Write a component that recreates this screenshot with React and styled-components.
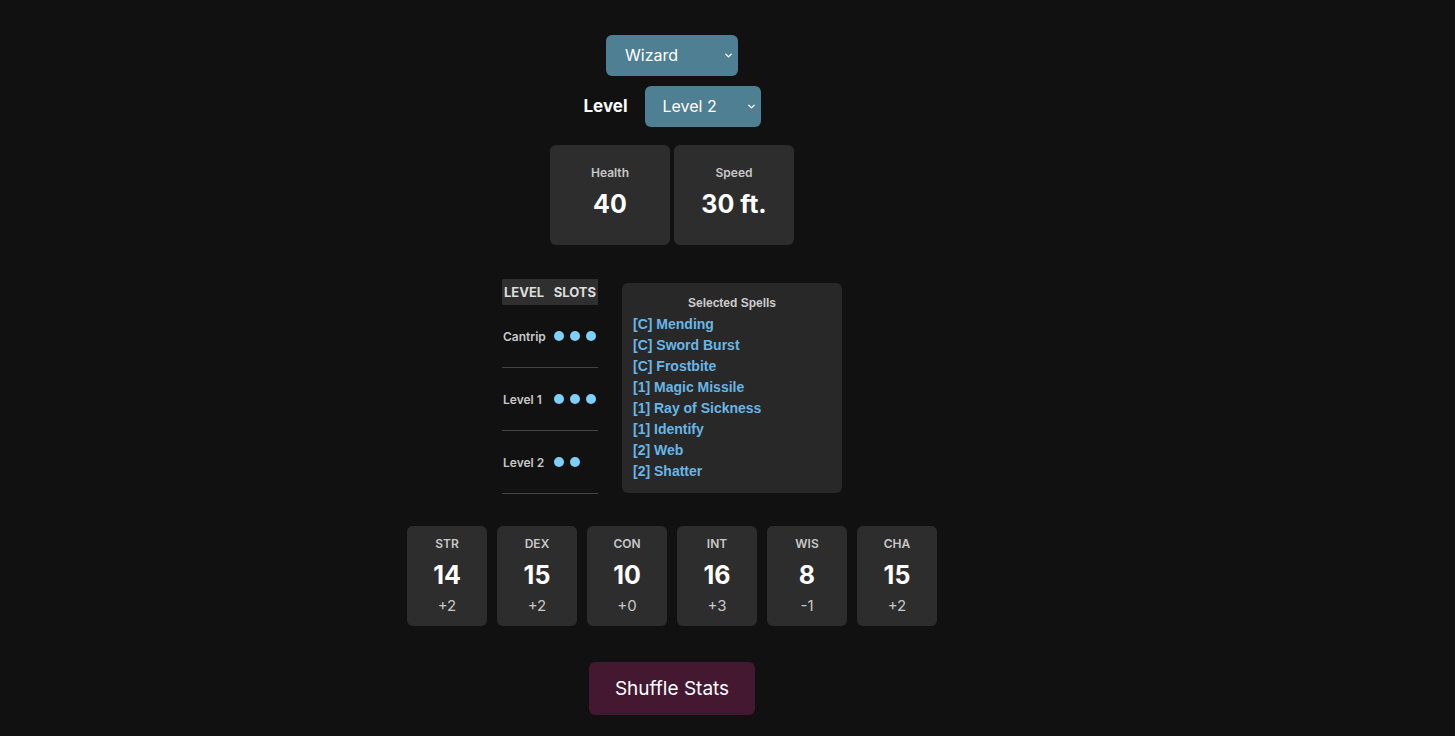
import styled, { createGlobalStyle } from "styled-components";
import { ChevronDown } from "lucide-react";

const GlobalStyle = createGlobalStyle`
  body {
    margin: 0;
    background: #111111;
    font-family: "Inter", "Noto Sans", sans-serif;
    color: #ffffff;
  }
`;

const Page = styled.div`
  display: flex;
  flex-direction: column;
  align-items: center;
  padding: 35px 111px 40px 0;
`;

const SelectWrap = styled.div`
  position: relative;
  width: ${(props) => props.width}px;
`;

const Select = styled.select`
  appearance: none;
  width: 100%;
  height: 41px;
  border: none;
  border-radius: 6px;
  background: #4f7f92;
  color: #ffffff;
  font-family: inherit;
  font-size: 16px;
  padding: 0 0 1px ${(props) => props.pad}px;
  outline: none;
`;

const Chevron = styled(ChevronDown)`
  position: absolute;
  right: 4px;
  top: 15px;
  pointer-events: none;
`;

const LevelRow = styled.div`
  display: flex;
  align-items: center;
  gap: 17px;
  margin-top: 10px;
`;

const Label = styled.span`
  font-size: 17px;
  font-weight: 700;
  margin-bottom: 1px;
`;

const CardRow = styled.div`
  display: flex;
  gap: ${(props) => props.gap}px;
  margin-top: ${(props) => props.top}px;
`;

const Card = styled.div`
  width: ${(props) => props.width}px;
  height: 100px;
  border-radius: 6px;
  background: #2d2d2d;
  display: flex;
  flex-direction: column;
  align-items: center;
  padding-top: ${(props) => props.pad}px;
  box-sizing: border-box;
`;

const CardLabel = styled.div`
  font-size: 12px;
  font-weight: 600;
  color: #c8c8c8;
  line-height: 16px;
`;

const CardValue = styled.div`
  font-size: 25px;
  font-weight: 700;
  line-height: 32px;
  margin-top: 7px;
`;

const Modifier = styled.div`
  font-size: 15px;
  color: #c8c8c8;
  line-height: 18px;
  margin-top: 6px;
`;

const SpellSection = styled.div`
  display: flex;
  align-items: flex-start;
  gap: 24px;
  margin-top: 34px;
`;

const SlotTable = styled.div`
  width: 96px;
  display: flex;
  flex-direction: column;
`;

const SlotHeader = styled.div`
  display: flex;
  justify-content: space-between;
  align-items: center;
  height: 26px;
  padding: 0 2px;
  background: #2f2f2f;
  font-size: 13px;
  font-weight: 700;
  color: #dddddd;
`;

const SlotRow = styled.div`
  display: flex;
  align-items: center;
  height: 62px;
  border-bottom: 1px solid #444444;
  padding-left: 1px;
`;

const SlotName = styled.div`
  width: 51px;
  font-size: 12px;
  font-weight: 600;
  color: #c8c8c8;
`;

const Dots = styled.div`
  display: flex;
  gap: 6px;
`;

const Dot = styled.span`
  width: 10px;
  height: 10px;
  border-radius: 50%;
  background: #7dd0fa;
`;

const SpellBox = styled.div`
  width: 220px;
  margin-top: 4px;
  background: #282828;
  border-radius: 6px;
  padding: 13px 11px 11px;
  box-sizing: border-box;
  font-family: "Liberation Sans", Arial, sans-serif;
`;

const SpellTitle = styled.div`
  text-align: center;
  font-size: 12px;
  font-weight: 700;
  color: #cccccc;
  line-height: 15px;
  margin-bottom: 3px;
`;

const Spell = styled.div`
  font-size: 14px;
  font-weight: 700;
  color: #68b6e6;
  line-height: 21px;
`;

const ShuffleButton = styled.button`
  margin-top: 36px;
  width: 166px;
  height: 53px;
  border: none;
  border-radius: 6px;
  background: #431830;
  color: #ffffff;
  font-family: inherit;
  font-size: 19px;
`;

const slots = [
  { name: "Cantrip", count: 3 },
  { name: "Level 1", count: 3 },
  { name: "Level 2", count: 2 },
];

const spells = [
  "[C] Mending",
  "[C] Sword Burst",
  "[C] Frostbite",
  "[1] Magic Missile",
  "[1] Ray of Sickness",
  "[1] Identify",
  "[2] Web",
  "[2] Shatter",
];

const stats = [
  { name: "STR", value: 14, mod: "+2" },
  { name: "DEX", value: 15, mod: "+2" },
  { name: "CON", value: 10, mod: "+0" },
  { name: "INT", value: 16, mod: "+3" },
  { name: "WIS", value: 8, mod: "-1" },
  { name: "CHA", value: 15, mod: "+2" },
];

export default function App() {
  return (
    <>
      <GlobalStyle />
      <Page>
        <SelectWrap width={132}>
          <Select pad={19} defaultValue="Wizard">
            <option>Wizard</option>
            <option>Fighter</option>
            <option>Rogue</option>
          </Select>
          <Chevron size={11} strokeWidth={3} color="#ffffff" />
        </SelectWrap>
        <LevelRow>
          <Label>Level</Label>
          <SelectWrap width={116}>
            <Select pad={18} defaultValue="Level 2">
              <option>Level 1</option>
              <option>Level 2</option>
              <option>Level 3</option>
            </Select>
            <Chevron size={11} strokeWidth={3} color="#ffffff" />
          </SelectWrap>
        </LevelRow>
        <CardRow gap={4} top={18}>
          <Card width={120} pad={20}>
            <CardLabel>Health</CardLabel>
            <CardValue>40</CardValue>
          </Card>
          <Card width={120} pad={20}>
            <CardLabel>Speed</CardLabel>
            <CardValue>30 ft.</CardValue>
          </Card>
        </CardRow>
        <SpellSection>
          <SlotTable>
            <SlotHeader>
              <span>LEVEL</span>
              <span>SLOTS</span>
            </SlotHeader>
            {slots.map((s) => (
              <SlotRow key={s.name}>
                <SlotName>{s.name}</SlotName>
                <Dots>
                  {Array.from({ length: s.count }).map((_, i) => (
                    <Dot key={i} />
                  ))}
                </Dots>
              </SlotRow>
            ))}
          </SlotTable>
          <SpellBox>
            <SpellTitle>Selected Spells</SpellTitle>
            {spells.map((sp) => (
              <Spell key={sp}>{sp}</Spell>
            ))}
          </SpellBox>
        </SpellSection>
        <CardRow gap={10} top={32}>
          {stats.map((s) => (
            <Card width={80} pad={10} key={s.name}>
              <CardLabel>{s.name}</CardLabel>
              <CardValue>{s.value}</CardValue>
              <Modifier>{s.mod}</Modifier>
            </Card>
          ))}
        </CardRow>
        <ShuffleButton>Shuffle Stats</ShuffleButton>
      </Page>
    </>
  );
}
